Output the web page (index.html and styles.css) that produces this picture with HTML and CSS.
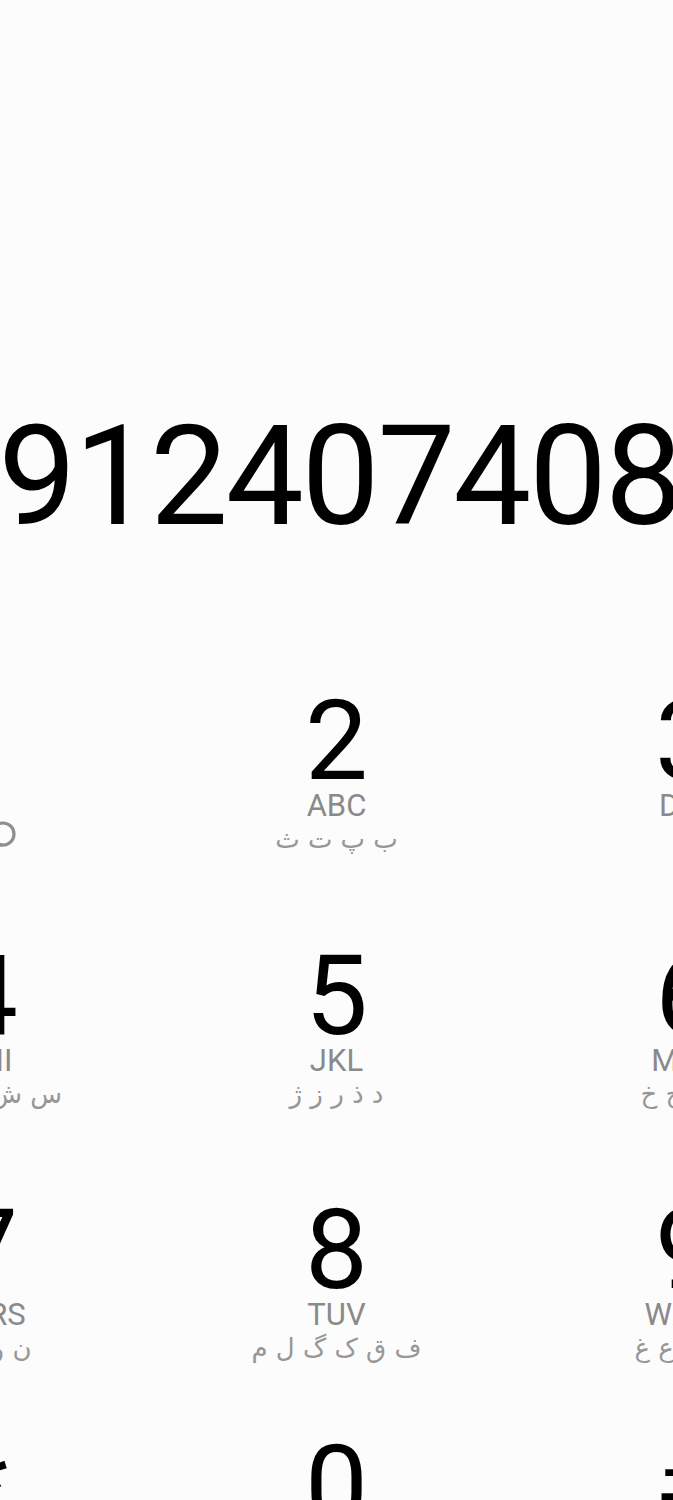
FILE: index.html
```html
<!DOCTYPE html>
<html lang="fa">
<head>
<meta charset="utf-8">
<title>Dialer</title>
<link rel="stylesheet" href="styles.css">
</head>
<body>
<main class="dialer">
  <section class="display">
    <div class="number" dir="ltr">912407408</div>
  </section>
  <section class="keypad">
    <div class="key">
      <span class="digit">1</span>
      <span class="vm">
        <svg class="vm-icon" viewBox="0 0 62 28" width="62" height="28" aria-hidden="true">
          <circle cx="15" cy="13" r="11" fill="none" stroke="#8e8e8e" stroke-width="3.2"/>
          <circle cx="47" cy="13" r="11" fill="none" stroke="#8e8e8e" stroke-width="3.2"/>
          <line x1="15" y1="24" x2="47" y2="24" stroke="#8e8e8e" stroke-width="3.2"/>
        </svg>
      </span>
    </div>
    <div class="key">
      <span class="digit">2</span>
      <span class="latin">ABC</span>
      <span class="persian" dir="rtl">ب پ ت ث</span>
    </div>
    <div class="key">
      <span class="digit">3</span>
      <span class="latin">DEF</span>
      <span class="persian" dir="rtl">ا</span>
    </div>
    <div class="key">
      <span class="digit">4</span>
      <span class="latin">GHI</span>
      <span class="persian" dir="rtl">س ش ص ض</span>
    </div>
    <div class="key">
      <span class="digit">5</span>
      <span class="latin">JKL</span>
      <span class="persian" dir="rtl">د ذ ر ز ژ</span>
    </div>
    <div class="key">
      <span class="digit">6</span>
      <span class="latin">MNO</span>
      <span class="persian" dir="rtl">ج چ ح خ</span>
    </div>
    <div class="key">
      <span class="digit">7</span>
      <span class="latin">PQRS</span>
      <span class="persian" dir="rtl">ن و ه ی</span>
    </div>
    <div class="key">
      <span class="digit">8</span>
      <span class="latin">TUV</span>
      <span class="persian" dir="rtl">ف ق ک گ ل م</span>
    </div>
    <div class="key">
      <span class="digit">9</span>
      <span class="latin">WXYZ</span>
      <span class="persian" dir="rtl">ط ظ ع غ</span>
    </div>
    <div class="key key-bottom">
      <span class="digit symbol">*</span>
    </div>
    <div class="key key-bottom">
      <span class="digit">0</span>
      <span class="latin">+</span>
    </div>
    <div class="key key-bottom">
      <span class="digit symbol">#</span>
    </div>
  </section>
</main>
</body>
</html>
```

FILE: styles.css
```css
html, body {
  margin: 0;
  padding: 0;
  background: #fcfcfc;
  overflow: hidden;
}

.dialer {
  width: 673px;
  height: 1500px;
  overflow: hidden;
  font-family: Roboto, "Noto Sans", sans-serif;
}

.display {
  height: 650px;
  padding-top: 407px;
  box-sizing: border-box;
  display: flex;
  justify-content: center;
}

.number {
  font-size: 139px;
  line-height: 140px;
  height: 140px;
  letter-spacing: -2.3px;
  color: #000;
  white-space: nowrap;
  flex: none;
  padding-left: 6px;
}

.keypad {
  width: 1050px;
  margin-left: -188.5px;
  display: grid;
  grid-template-columns: repeat(3, 350px);
  grid-auto-rows: 254.5px;
}

.key {
  display: flex;
  flex-direction: column;
  align-items: center;
  justify-content: flex-start;
  padding-top: 43px;
  box-sizing: border-box;
}

.key-bottom {
  padding-top: 24px;
}

.digit {
  font-size: 112px;
  line-height: 96px;
  height: 96px;
  color: #000;
}

.symbol {
  font-size: 100px;
}

.latin {
  font-size: 31px;
  line-height: 34px;
  height: 34px;
  color: #8a8a8a;
}

.persian {
  font-family: "DejaVu Sans", sans-serif;
  font-size: 26px;
  line-height: 32px;
  height: 38px;
  color: #979797;
  white-space: nowrap;
}

.vm {
  height: 72px;
  box-sizing: border-box;
  padding-top: 32px;
  display: flex;
  justify-content: center;
}

.vm-icon {
  display: block;
}
```
